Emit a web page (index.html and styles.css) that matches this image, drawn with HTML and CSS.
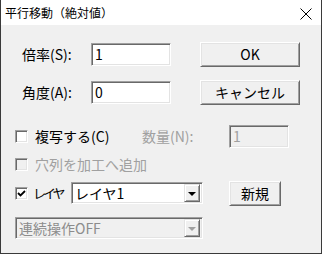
FILE: index.html
```html
<!DOCTYPE html>
<html lang="ja">
<head>
  <meta charset="UTF-8">
  <title>平行移動（絶対値）</title>
  <link rel="stylesheet" href="styles.css">
</head>

<body>
  <div class="window">

    <!-- Title bar -->
    <div class="titlebar">
      <span class="title">平行移動（絶対値）</span>
      <svg class="close-icon" width="12" height="12" viewBox="0 0 12 12">
        <path d="M0.5 0.5 L11.5 11.5 M11.5 0.5 L0.5 11.5" stroke="#000" stroke-width="1" fill="none"/>
      </svg>
    </div>

    <!-- Dialog body -->
    <div class="dialog">
      <div class="row row-scale">
        <span class="field-label">倍率(S):</span>
        <div class="edit edit-main">1</div>
        <button class="btn btn-wide">OK</button>
      </div>

      <div class="row row-angle">
        <span class="field-label">角度(A):</span>
        <div class="edit edit-main">0</div>
        <button class="btn btn-wide">キャンセル</button>
      </div>

      <div class="row row-copy">
        <div class="check-item check-copy">
          <span class="checkbox"></span>
          <span class="check-text">複写する(C)</span>
        </div>
        <span class="count-label disabled-text">数量(N):</span>
        <div class="edit edit-count is-disabled">1</div>
      </div>

      <div class="row row-hole">
        <div class="check-item">
          <span class="checkbox is-disabled"></span>
          <span class="check-text disabled-text">穴列を加工へ追加</span>
        </div>
      </div>

      <div class="row row-layer">
        <div class="check-item check-layer">
          <span class="checkbox">
            <svg width="9" height="9" viewBox="0 0 9 9">
              <path d="M1 4 L3.5 6.5 L8 2" stroke="#000" stroke-width="1.8" fill="none"/>
            </svg>
          </span>
          <span class="check-text">レイヤ</span>
        </div>
        <div class="combo combo-layer">
          <span class="combo-text">レイヤ1</span>
          <span class="combo-button"><span class="arrow"></span></span>
        </div>
        <button class="btn btn-new">新規</button>
      </div>

      <div class="row row-mode">
        <div class="combo combo-mode is-disabled">
          <span class="combo-text">連続操作OFF</span>
          <span class="combo-button"><span class="arrow"></span></span>
        </div>
      </div>
    </div>

  </div>
</body>
</html>
```

FILE: styles.css
```css
:root {
  --face: #f0f0f0;
  --shadow: #a0a0a0;
  --dark-shadow: #696969;
  --light: #e3e3e3;
  --highlight: #ffffff;
  --frame: #3a3a3a;
  --disabled: #a0a0a0;
}

html, body {
  margin: 0;
  padding: 0;
  background: #ffffff;
  font-family: "Noto Sans CJK JP", "Noto Sans", sans-serif;
  color: #000;
}

.window {
  width: 322px;
  height: 254px;
  box-sizing: border-box;
  border: 1px solid var(--frame);
  border-top: none;
  display: flex;
  flex-direction: column;
}

.titlebar {
  height: 25px;
  background: #ffffff;
  display: flex;
  align-items: center;
  padding: 0 9px 0 4px;
  flex-shrink: 0;
}

.title {
  font-size: 12px;
  line-height: 14px;
  flex: 1;
}

.close-icon {
  display: block;
  margin-top: 2px;
}

.dialog {
  flex: 1;
  background: var(--face);
  padding: 15px 0 0 14px;
  font-size: 14px;
  white-space: nowrap;
}

.row {
  display: flex;
  align-items: center;
  height: 28px;
}

.row-angle { margin-top: 10px; }
.row-copy  { margin-top: 16px; }
.row-layer { margin-top: 1px; }
.row-mode  { margin-top: 7px; }

.field-label {
  width: 69px;
  margin-left: 7px;
  line-height: 16px;
}

/* sunken edit box */
.edit {
  box-sizing: border-box;
  height: 23px;
  background: #ffffff;
  border: 1px solid;
  border-color: var(--shadow) var(--highlight) var(--highlight) var(--shadow);
  box-shadow: inset 1px 1px var(--dark-shadow), inset -1px -1px var(--light);
  padding: 0 3px;
  line-height: 21px;
}

.edit-main {
  width: 80px;
}

.edit-count {
  width: 60px;
}

.edit.is-disabled {
  background: var(--face);
  color: var(--disabled);
}

/* raised push button */
.btn {
  box-sizing: border-box;
  height: 25px;
  background: var(--face);
  border: 1px solid;
  border-color: var(--highlight) var(--dark-shadow) var(--dark-shadow) var(--highlight);
  box-shadow: inset 1px 1px var(--light), inset -1px -1px var(--shadow);
  font-family: inherit;
  font-size: 14px;
  line-height: 20px;
  padding: 0;
  color: #000;
}

.btn-wide {
  width: 100px;
  margin-left: 29px;
}

.btn-new {
  width: 52px;
  margin-left: 26px;
}

.check-item {
  display: flex;
  align-items: center;
}

.check-copy {
  width: 127px;
}

.checkbox {
  box-sizing: border-box;
  width: 13px;
  height: 13px;
  flex-shrink: 0;
  background: #ffffff;
  border: 1px solid;
  border-color: var(--shadow) var(--highlight) var(--highlight) var(--shadow);
  box-shadow: inset 1px 1px var(--dark-shadow), inset -1px -1px var(--light);
  display: flex;
  align-items: center;
  justify-content: center;
}

.checkbox.is-disabled {
  background: var(--face);
}

.checkbox svg {
  display: block;
}

.check-text {
  margin-left: 7px;
  line-height: 16px;
}

.check-layer .check-text {
  margin-left: 5px;
  width: 38px;
  font-size: 13px;
  letter-spacing: -3px;
}

.disabled-text {
  color: var(--disabled);
}

.count-label {
  width: 87px;
  line-height: 16px;
}

/* drop-down list */
.combo {
  box-sizing: border-box;
  height: 22px;
  background: #ffffff;
  border: 1px solid;
  border-color: var(--shadow) var(--highlight) var(--highlight) var(--shadow);
  box-shadow: inset 1px 1px var(--dark-shadow), inset -1px -1px var(--light);
  display: flex;
  align-items: center;
  padding: 2px;
}

.combo-layer {
  width: 132px;
}

.combo-mode {
  width: 188px;
}

.combo.is-disabled {
  background: var(--face);
  color: #8c8c8c;
}

.combo-text {
  flex: 1;
  line-height: 16px;
  padding-left: 1px;
}

.combo-button {
  box-sizing: border-box;
  width: 16px;
  height: 18px;
  background: var(--face);
  border: 1px solid;
  border-color: var(--light) var(--dark-shadow) var(--dark-shadow) var(--light);
  box-shadow: inset 1px 1px var(--highlight), inset -1px -1px var(--shadow);
  display: flex;
  align-items: center;
  justify-content: center;
}

.arrow {
  width: 0;
  height: 0;
  border-left: 4px solid transparent;
  border-right: 4px solid transparent;
  border-top: 4px solid #000;
  margin-top: 1px;
}

.combo.is-disabled .arrow {
  border-top-color: var(--disabled);
}
```
